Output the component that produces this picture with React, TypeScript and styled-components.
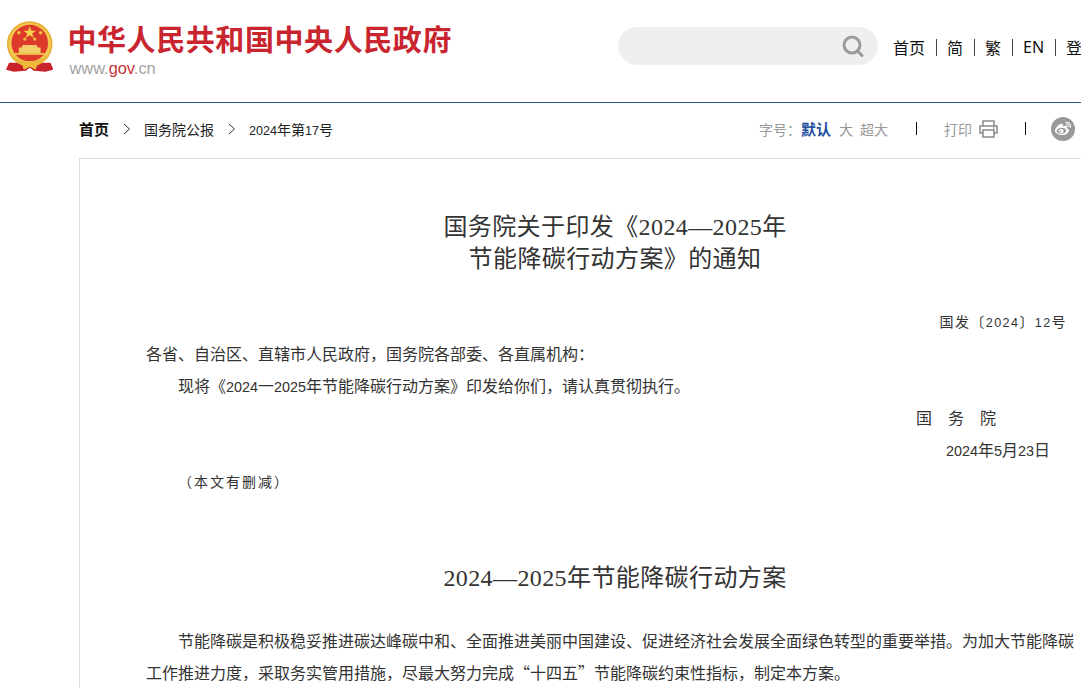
import styled, { createGlobalStyle } from "styled-components"
import { FaWeibo } from "react-icons/fa"

const GlobalStyle = createGlobalStyle`
  html, body {
    margin: 0;
    padding: 0;
    height: 688px;
    overflow: hidden;
    background: #fff;
  }
  body {
    width: 1200px;
    font-family: "Noto Sans CJK SC", sans-serif;
    color: #333;
  }
`

const Header = styled.header`
  display: flex;
  align-items: flex-start;
  height: 102px;
  padding-left: 6px;
  border-bottom: 1px solid #2b5a94;
`

const Brand = styled.div`
  display: flex;
  gap: 14px;
  width: 446px;
  padding-top: 21px;
`

const BrandText = styled.div`
  display: flex;
  flex-direction: column;
`

const BrandName = styled.div`
  margin-top: -1px;
  font-size: 29px;
  line-height: 36px;
  font-weight: 700;
  letter-spacing: 0.58px;
  color: #c9252f;
  white-space: nowrap;
`

const BrandUrl = styled.div`
  margin: 3px 0 0 2px;
  font-family: "Liberation Sans", sans-serif;
  font-size: 16.4px;
  line-height: 18px;
  color: #a3a3a3;

  b {
    font-weight: 400;
    color: #c4343c;
  }
`

const SearchBox = styled.div`
  display: flex;
  align-items: center;
  justify-content: flex-end;
  flex-shrink: 0;
  box-sizing: border-box;
  width: 260px;
  height: 38px;
  margin: 27px 0 0 166px;
  padding-right: 14px;
  border-radius: 19px;
  background: #efefef;
`

const TopNav = styled.nav`
  display: flex;
  align-items: center;
  flex-shrink: 0;
  height: 38px;
  margin: 28px 0 0 15px;
  font-size: 16px;
  color: #111;
  white-space: nowrap;
`

const TopNavLink = styled.a`
  font-family: ${({ lang }) => (lang === "en" ? '"Noto Sans", sans-serif' : "inherit")};
`

const TopNavSep = styled.span`
  width: 1px;
  height: 17px;
  margin: 0 10.5px;
  background: #444;
`

const SubBar = styled.div`
  display: flex;
  align-items: center;
  justify-content: space-between;
  box-sizing: border-box;
  width: 996px;
  height: 55px;
  margin-left: 79px;
  padding-bottom: 4px;
  font-size: 14px;
`

const Crumbs = styled.div`
  display: flex;
  align-items: center;
  color: #222;
`

const CrumbHome = styled.strong`
  font-size: 15px;
  font-weight: 700;
  color: #111;
`

const CrumbArrow = styled.svg`
  width: 8px;
  height: 12px;
  margin: 0 13px 0 14px;
`

const Tools = styled.div`
  display: flex;
  align-items: center;
  color: #999;
`

const SizeOption = styled.span<{ $active?: boolean }>`
  margin-right: ${({ $active }) => ($active ? "8px" : "7px")};
  font-size: ${({ $active }) => ($active ? "15px" : "14px")};
  font-weight: ${({ $active }) => ($active ? 700 : 400)};
  color: ${({ $active }) => ($active ? "#1f4f9f" : "#999")};
`

const ToolSep = styled.span`
  width: 1px;
  height: 13px;
  margin: 0 27px 0 21px;
  background: #111;
`

const PrintSep = styled(ToolSep)`
  margin: 0 25px 0 27px;
`

const PrintIcon = styled.svg`
  width: 19px;
  height: 18px;
  margin-left: 7px;
`

const WeiboBadge = styled.span`
  display: flex;
  align-items: center;
  justify-content: center;
  width: 24px;
  height: 24px;
  border-radius: 50%;
  background: #999;
  color: #fff;
  font-size: 16px;
`

const Article = styled.main`
  box-sizing: border-box;
  width: 1071px;
  margin-left: 79px;
  padding: 52px 65px 0 66px;
  border: 1px solid #e0e0e0;
  border-bottom: 0;
`

const Title = styled.h1`
  margin: 0;
  font-family: "Liberation Serif", "Noto Sans CJK SC", serif;
  font-size: 24px;
  line-height: 32px;
  font-weight: 400;
  letter-spacing: 0.4px;
  text-align: center;
  color: #333;
`

const SectionTitle = styled(Title)`
  margin-top: 65px;
`

const DocNumber = styled.p`
  margin: 30px 17px 0 0;
  font-size: 14px;
  line-height: 32px;
  letter-spacing: 1.4px;
  text-align: right;
`

const Para = styled.p<{ $indent?: boolean }>`
  margin: 0;
  font-size: 16px;
  line-height: 32px;
  text-indent: ${({ $indent }) => ($indent ? "32px" : "0")};
`

const Lead = styled(Para)`
  margin-top: 30px;
`

const Signature = styled(Para)`
  padding-right: 72px;
  letter-spacing: 16px;
  text-align: right;
`

const SignDate = styled(Para)`
  padding-right: 34px;
  text-align: right;
`

const Note = styled.p`
  margin: 0 0 0 32px;
  font-size: 14px;
  line-height: 32px;
  letter-spacing: 2px;
`

const Num = styled.span`
  font-family: "Liberation Sans", sans-serif;
  font-size: 0.9em;
  line-height: 0;
`

function Emblem() {
  return (
    <svg width="48" height="52" viewBox="0 0 48 52" aria-label="国徽">
      <path d="M3 42 L0 49 L8 51 L20 50 L24 47 L28 50 L40 51 L48 49 L45 42 Z" fill="#c8232b" />
      <circle cx="24" cy="23" r="23" fill="#e6ac2e" />
      <circle cx="24" cy="23" r="21.5" fill="#f2c64f" />
      <circle cx="24" cy="22" r="18.5" fill="#dd3a2c" />
      <polygon points="24,5 25.6,9.6 30.4,9.6 26.5,12.4 28,17 24,14.2 20,17 21.5,12.4 17.6,9.6 22.4,9.6" fill="#f6d24e" />
      <circle cx="13" cy="11.5" r="1.8" fill="#f0c243" />
      <circle cx="35" cy="11.5" r="1.8" fill="#f0c243" />
      <circle cx="19" cy="18" r="1.6" fill="#f0c243" />
      <circle cx="29" cy="18" r="1.6" fill="#f0c243" />
      <path d="M17 24 H31 L32 26.5 H35 V32 H13 V26.5 H16 Z" fill="#f3cf6a" />
      <rect x="9" y="32" width="30" height="2" fill="#eec04a" />
      <path d="M5 34 Q24 47 43 34 L41 39 Q24 50 7 39 Z" fill="#eab93c" />
      <path d="M16 43 H32 L30 49 L24 46 L18 49 Z" fill="#eeb93a" />
    </svg>
  )
}

export default function App() {
  return (
    <>
      <GlobalStyle />
      <Header>
        <Brand>
          <Emblem />
          <BrandText>
            <BrandName>中华人民共和国中央人民政府</BrandName>
            <BrandUrl>
              www.<b>gov</b>.cn
            </BrandUrl>
          </BrandText>
        </Brand>
        <SearchBox>
          <svg width="22" height="22" viewBox="0 0 22 22" fill="none" stroke="#9b9b9b" strokeWidth="3">
            <circle cx="10" cy="10" r="8" />
            <path d="M15.5 16 L20 20.5" strokeLinecap="round" />
          </svg>
        </SearchBox>
        <TopNav>
          <TopNavLink>首页</TopNavLink>
          <TopNavSep />
          <TopNavLink>简</TopNavLink>
          <TopNavSep />
          <TopNavLink>繁</TopNavLink>
          <TopNavSep />
          <TopNavLink lang="en">EN</TopNavLink>
          <TopNavSep />
          <TopNavLink>登录</TopNavLink>
        </TopNav>
      </Header>

      <SubBar>
        <Crumbs>
          <CrumbHome>首页</CrumbHome>
          <CrumbArrow viewBox="0 0 8 12" fill="none" stroke="#333">
            <path d="M1 1 L6.5 6 L1 11" />
          </CrumbArrow>
          国务院公报
          <CrumbArrow viewBox="0 0 8 12" fill="none" stroke="#333">
            <path d="M1 1 L6.5 6 L1 11" />
          </CrumbArrow>
          <span>
            <Num>2024</Num>年第<Num>17</Num>号
          </span>
        </Crumbs>
        <Tools>
          <span>字号：</span>
          <SizeOption $active>默认</SizeOption>
          <SizeOption>大</SizeOption>
          <SizeOption>超大</SizeOption>
          <ToolSep />
          打印
          <PrintIcon viewBox="0 0 19 18" fill="none" stroke="#8a8a8a" strokeWidth="1.5">
            <path d="M4 6 V1 H15 V6" />
            <path d="M4 13 H1 V6 H18 V13 H15" />
            <path d="M4 10 H15 V17 H4 Z" />
            <path d="M14 8 H15.5" />
          </PrintIcon>
          <PrintSep />
          <WeiboBadge>
            <FaWeibo />
          </WeiboBadge>
        </Tools>
      </SubBar>

      <Article>
        <Title>
          国务院关于印发《2024—2025年
          <br />
          节能降碳行动方案》的通知
        </Title>
        <DocNumber>
          国发〔<Num>2024</Num>〕<Num>12</Num>号
        </DocNumber>
        <Para>各省、自治区、直辖市人民政府，国务院各部委、各直属机构：</Para>
        <Para $indent>
          现将《<Num>2024</Num>一<Num>2025</Num>年节能降碳行动方案》印发给你们，请认真贯彻执行。
        </Para>
        <Signature>国务院</Signature>
        <SignDate>
          <Num>2024</Num>年<Num>5</Num>月<Num>23</Num>日
        </SignDate>
        <Note>（本文有删减）</Note>
        <SectionTitle>2024—2025年节能降碳行动方案</SectionTitle>
        <Lead $indent>
          节能降碳是积极稳妥推进碳达峰碳中和、全面推进美丽中国建设、促进经济社会发展全面绿色转型的重要举措。为加大节能降碳工作推进力度，采取务实管用措施，尽最大努力完成“十四五”节能降碳约束性指标，制定本方案。
        </Lead>
      </Article>
    </>
  )
}
